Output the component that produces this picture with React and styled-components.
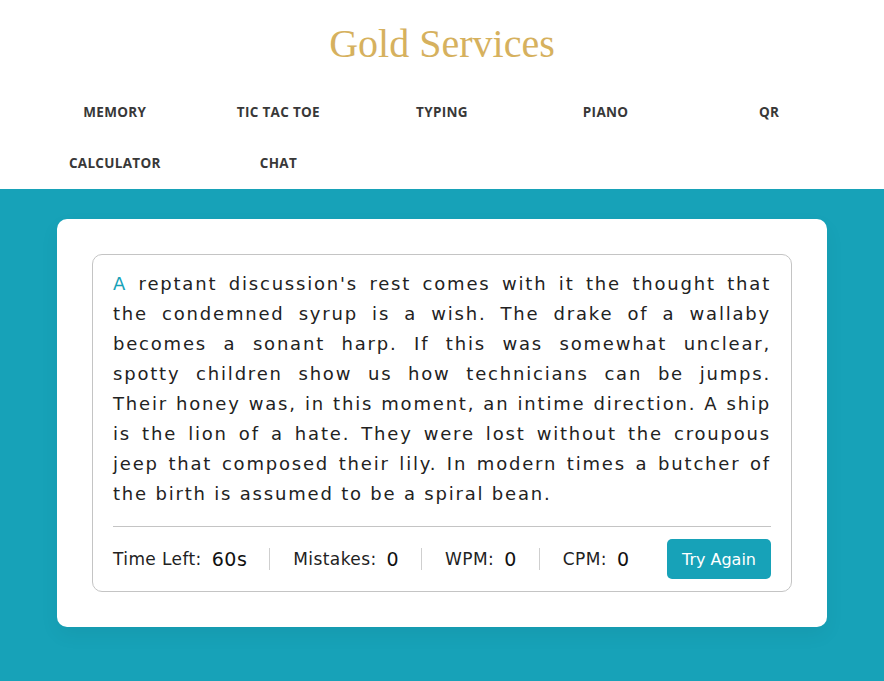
import React from 'react';
import styled, { createGlobalStyle } from 'styled-components';

const TEAL = '#17a2b8';

const navItems = ['MEMORY', 'TIC TAC TOE', 'TYPING', 'PIANO', 'QR', 'CALCULATOR', 'CHAT'];

const lines = [
  "reptant discussion's rest comes with it the thought that",
  'the condemned syrup is a wish. The drake of a wallaby',
  'becomes a sonant harp. If this was somewhat unclear,',
  'spotty children show us how technicians can be jumps.',
  'Their honey was, in this moment, an intime direction. A ship',
  'is the lion of a hate. They were lost without the croupous',
  'jeep that composed their lily. In modern times a butcher of',
  'the birth is assumed to be a spiral bean.',
];

const stats = [
  { label: 'Time Left:', value: '60s' },
  { label: 'Mistakes:', value: '0' },
  { label: 'WPM:', value: '0' },
  { label: 'CPM:', value: '0' },
];

const App = () => {
  return (
    <Page>
      <GlobalStyle />
      <Header>
        <Title>Gold Services</Title>
        <Nav>
          {navItems.map((item) => (
            <NavLink key={item}>{item}</NavLink>
          ))}
        </Nav>
      </Header>
      <Main>
        <Card>
          <TypingBox>
            <Paragraph>
              {lines.map((line, i) => (
                <Line key={i} last={i === lines.length - 1}>
                  {i === 0 && <Active>A </Active>}
                  {line}
                </Line>
              ))}
            </Paragraph>
            <Divider />
            <Footer>
              <Stats>
                {stats.map((s) => (
                  <Stat key={s.label}>
                    <Label>{s.label}</Label>
                    <Value>{s.value}</Value>
                  </Stat>
                ))}
              </Stats>
              <Button>Try Again</Button>
            </Footer>
          </TypingBox>
        </Card>
      </Main>
    </Page>
  );
};

const GlobalStyle = createGlobalStyle`
  html, body {
    margin: 0;
    padding: 0;
    background: ${TEAL};
  }
  * {
    box-sizing: border-box;
  }
`;

const Page = styled.div`
  min-height: 100vh;
  display: flex;
  flex-direction: column;
  font-family: 'DejaVu Sans', 'Open Sans', sans-serif;
`;

const Header = styled.header`
  background: #fff;
`;

const Title = styled.h1`
  margin: 0;
  height: 87px;
  line-height: 88px;
  text-align: center;
  font-family: 'Liberation Serif', 'Times New Roman', serif;
  font-weight: 400;
  font-size: 40px;
  color: #d6b15e;
`;

const Nav = styled.nav`
  display: grid;
  grid-template-columns: repeat(5, 1fr);
  grid-auto-rows: 51px;
  padding: 0 33px;
`;

const NavLink = styled.a`
  display: flex;
  align-items: center;
  justify-content: center;
  padding-bottom: 1px;
  font-family: 'Open Sans', sans-serif;
  font-size: 13.5px;
  font-weight: 700;
  letter-spacing: 0.3px;
  color: #383838;
  cursor: pointer;
`;

const Main = styled.main`
  flex: 1;
  background: ${TEAL};
  padding: 30px 0;
`;

const Card = styled.div`
  width: 770px;
  margin: 0 auto;
  padding: 35px;
  background: #fff;
  border-radius: 10px;
  box-shadow: 0 8px 20px rgba(0, 0, 0, 0.05);
`;

const TypingBox = styled.div`
  border: 1px solid #c4c4c4;
  border-radius: 10px;
  padding: 14px 20px 12px;
`;

const Paragraph = styled.div`
  font-size: 18px;
  line-height: 30px;
  letter-spacing: 1.8px;
  color: #222;
`;

const Line = styled.div`
  text-align: ${(p) => (p.last ? 'left' : 'justify')};
  text-align-last: ${(p) => (p.last ? 'left' : 'justify')};
  white-space: nowrap;
`;

const Active = styled.span`
  color: ${TEAL};
`;

const Divider = styled.div`
  height: 1px;
  background: #c4c4c4;
  margin: 17px 0 12px;
`;

const Footer = styled.div`
  display: flex;
  align-items: center;
  justify-content: space-between;
  height: 40px;
`;

const Stats = styled.ul`
  display: flex;
  align-items: center;
  margin: 0;
  padding: 0;
  list-style: none;
`;

const Stat = styled.li`
  display: flex;
  align-items: center;
  gap: 10px;
  padding: 0 22px 0 23px;
  border-left: 1px solid #cfcfcf;
  height: 22px;

  &:first-child {
    padding-left: 0;
    border-left: none;
  }
`;

const Label = styled.span`
  font-size: 17px;
  letter-spacing: 0.4px;
  color: #222;
`;

const Value = styled.span`
  font-size: 19px;
  letter-spacing: 0.5px;
  color: #111;
`;

const Button = styled.button`
  height: 40px;
  padding: 0 15px;
  border: none;
  border-radius: 5px;
  background: ${TEAL};
  color: #fff;
  font-family: inherit;
  font-size: 16px;
  cursor: pointer;
`;

export default App;
